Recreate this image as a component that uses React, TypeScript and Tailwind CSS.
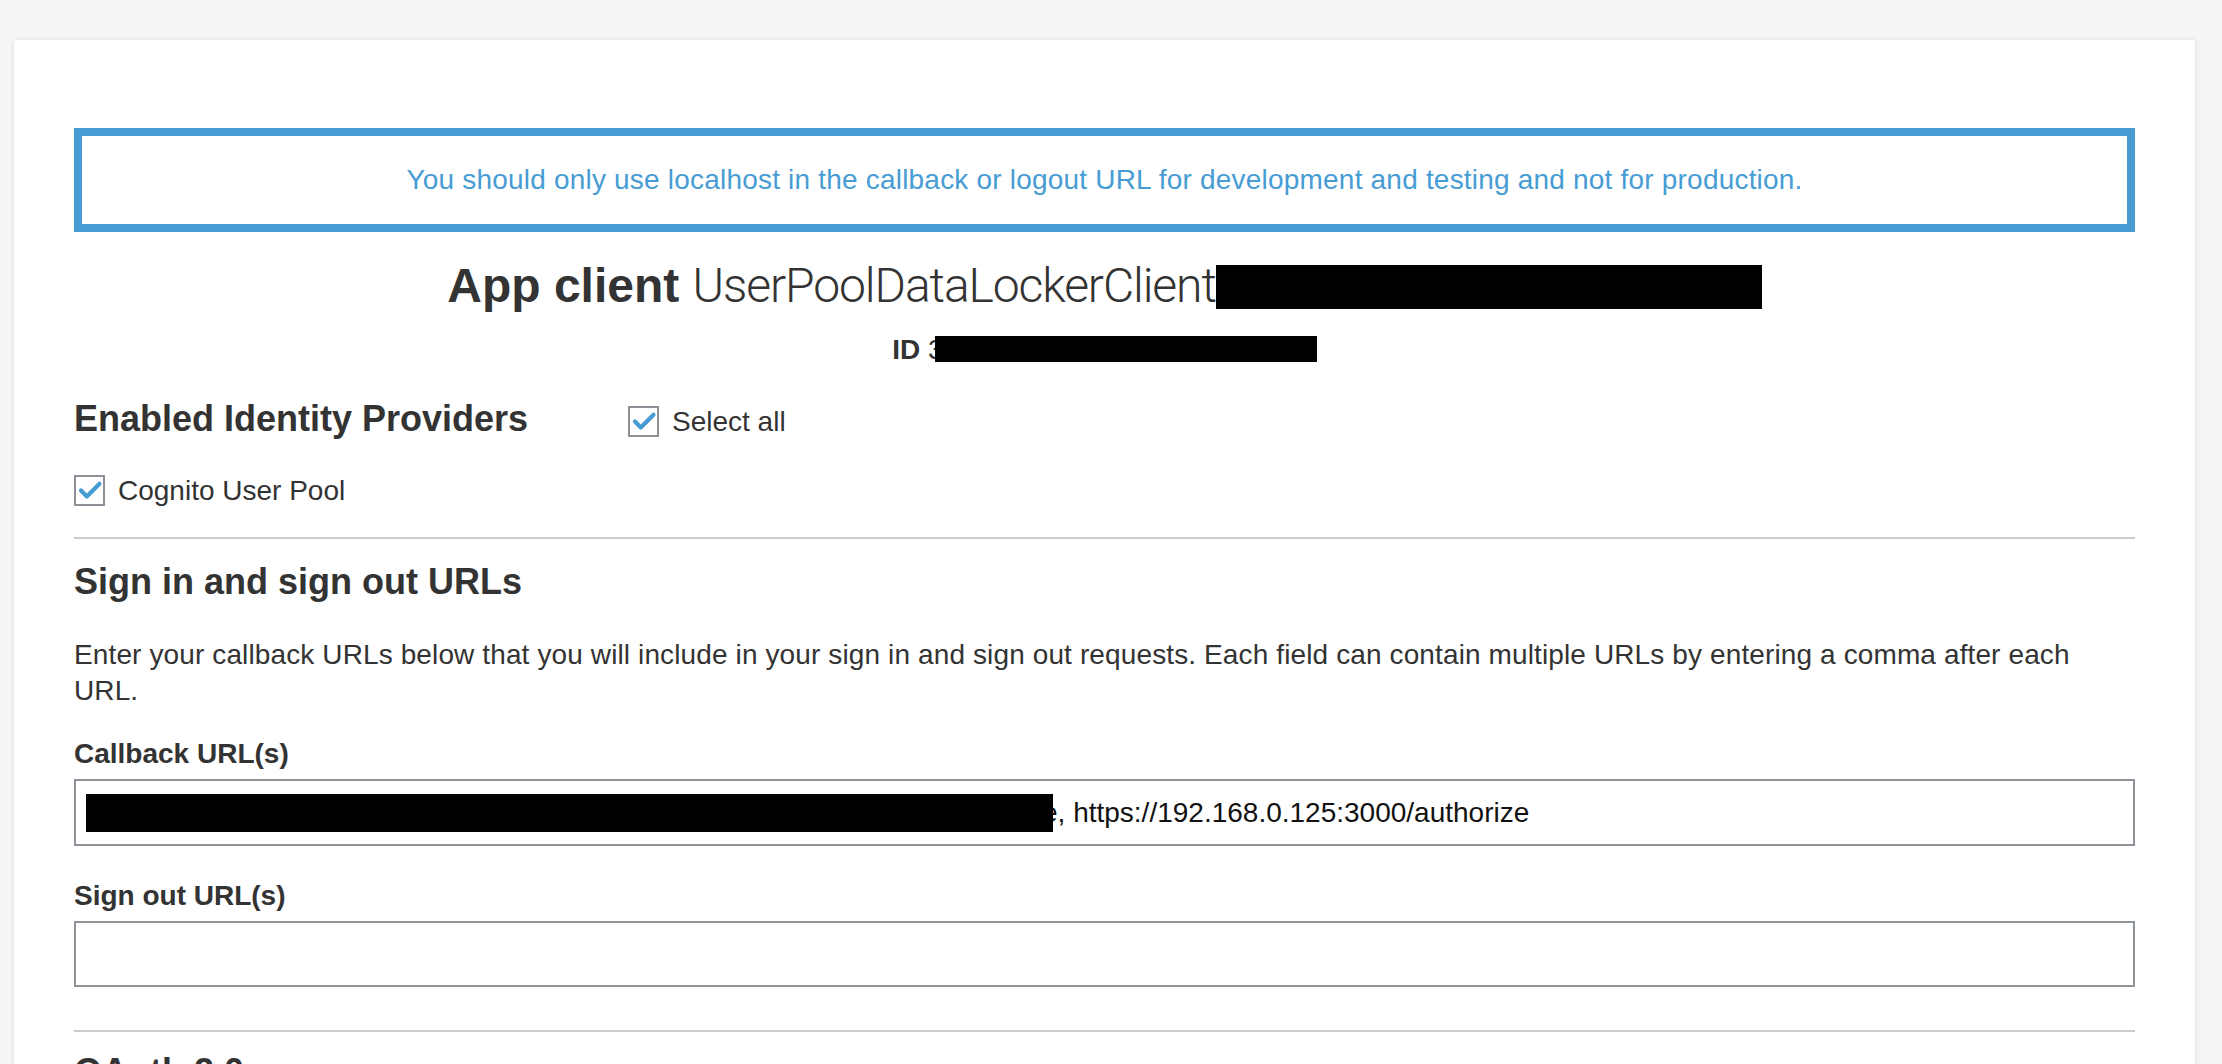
import React from 'react';

function CheckBox() {
	return (
		<span className="flex h-[31px] w-[31px] shrink-0 items-center justify-center border-2 border-[#8b9196] bg-white">
			<svg viewBox="0 0 27 27" className="h-[27px] w-[27px]">
				<path
					d="M5 13.5 L10.8 19.5 L23.5 6.8"
					fill="none"
					stroke="#479cd4"
					strokeWidth="4.2"
					strokeLinecap="round"
					strokeLinejoin="round"
				/>
			</svg>
		</span>
	);
}

function Redacted({ className }: { className: string }) {
	return <span className={`inline-block bg-black ${className}`} />;
}

export default function App() {
	return (
		<div className="h-[1064px] overflow-hidden bg-[#f4f5f5] pl-[14px] pr-[27px] pt-[40px] font-['Liberation_Sans',Arial,sans-serif] text-[#333]">
			<div className="min-h-[1100px] rounded-[3px] bg-white px-[60px] pt-[88px] shadow-[0_0_5px_rgba(0,0,0,0.10)]">
				{/* localhost warning */}
				<div className="flex h-[104px] items-center justify-center border-[8px] border-[#479cd4] text-[28px] leading-[40px] tracking-[0.2px] text-[#479cd4]">
					You should only use localhost in the callback or logout URL for development and testing and not for production.
				</div>

				<h2 className="mt-[26px] text-center text-[48px] leading-[56px] whitespace-nowrap">
					<span className="font-bold">App client</span>{' '}
					<span className="font-['Roboto',sans-serif] font-light tracking-[-1.1px]">UserPoolDataLockerClient</span>
					<Redacted className="h-[44px] w-[546px] align-[-7px]" />
				</h2>
				<div className="mt-[16px] text-center text-[28px] leading-[40px] whitespace-nowrap">
					<span className="font-bold">ID</span> 3
					<Redacted className="relative z-10 -ml-[9px] h-[26px] w-[382px] align-[-3px]" />
				</div>

				{/* identity providers */}
				<div className="mt-[27px] flex">
					<h3 className="w-[554px] text-[36px] font-bold leading-[44px]">Enabled Identity Providers</h3>
					<label className="mt-[9px] flex h-[31px] items-center gap-[13px] text-[28px] leading-[31px]">
						<CheckBox />
						Select all
					</label>
				</div>
				<label className="mt-[34px] flex h-[31px] items-center gap-[13px] text-[28px] leading-[31px]">
					<CheckBox />
					Cognito User Pool
				</label>

				<div className="mt-[31px] border-t-2 border-[#cccccc]" />

				{/* sign in / sign out */}
				<h3 className="mt-[21px] text-[36px] font-bold leading-[44px]">Sign in and sign out URLs</h3>
				<p className="mt-[33px] text-[28px] leading-[36px] tracking-[0.12px]">
					Enter your callback URLs below that you will include in your sign in and sign out requests. Each field can contain multiple URLs by entering a comma after each
					<br />
					URL.
				</p>

				<div className="mt-[25px] text-[28px] font-bold leading-[40px]">Callback URL(s)</div>
				<div className="mt-[5px] flex h-[67px] items-center whitespace-nowrap border-2 border-[#8d9398] pl-[10px] text-[28px] text-[#111]">
					<Redacted className="relative z-10 -mr-[11px] h-[38px] w-[967px]" />
					e, https://192.168.0.125:3000/authorize
				</div>

				<div className="mt-[30px] text-[28px] font-bold leading-[40px]">Sign out URL(s)</div>
				<div className="mt-[5px] h-[66px] border-2 border-[#8d9398]" />

				<div className="mt-[43px] border-t-2 border-[#cccccc]" />

				<h3 className="mt-[18px] text-[36px] font-bold leading-[44px]">OAuth 2.0</h3>
			</div>
		</div>
	);
}
